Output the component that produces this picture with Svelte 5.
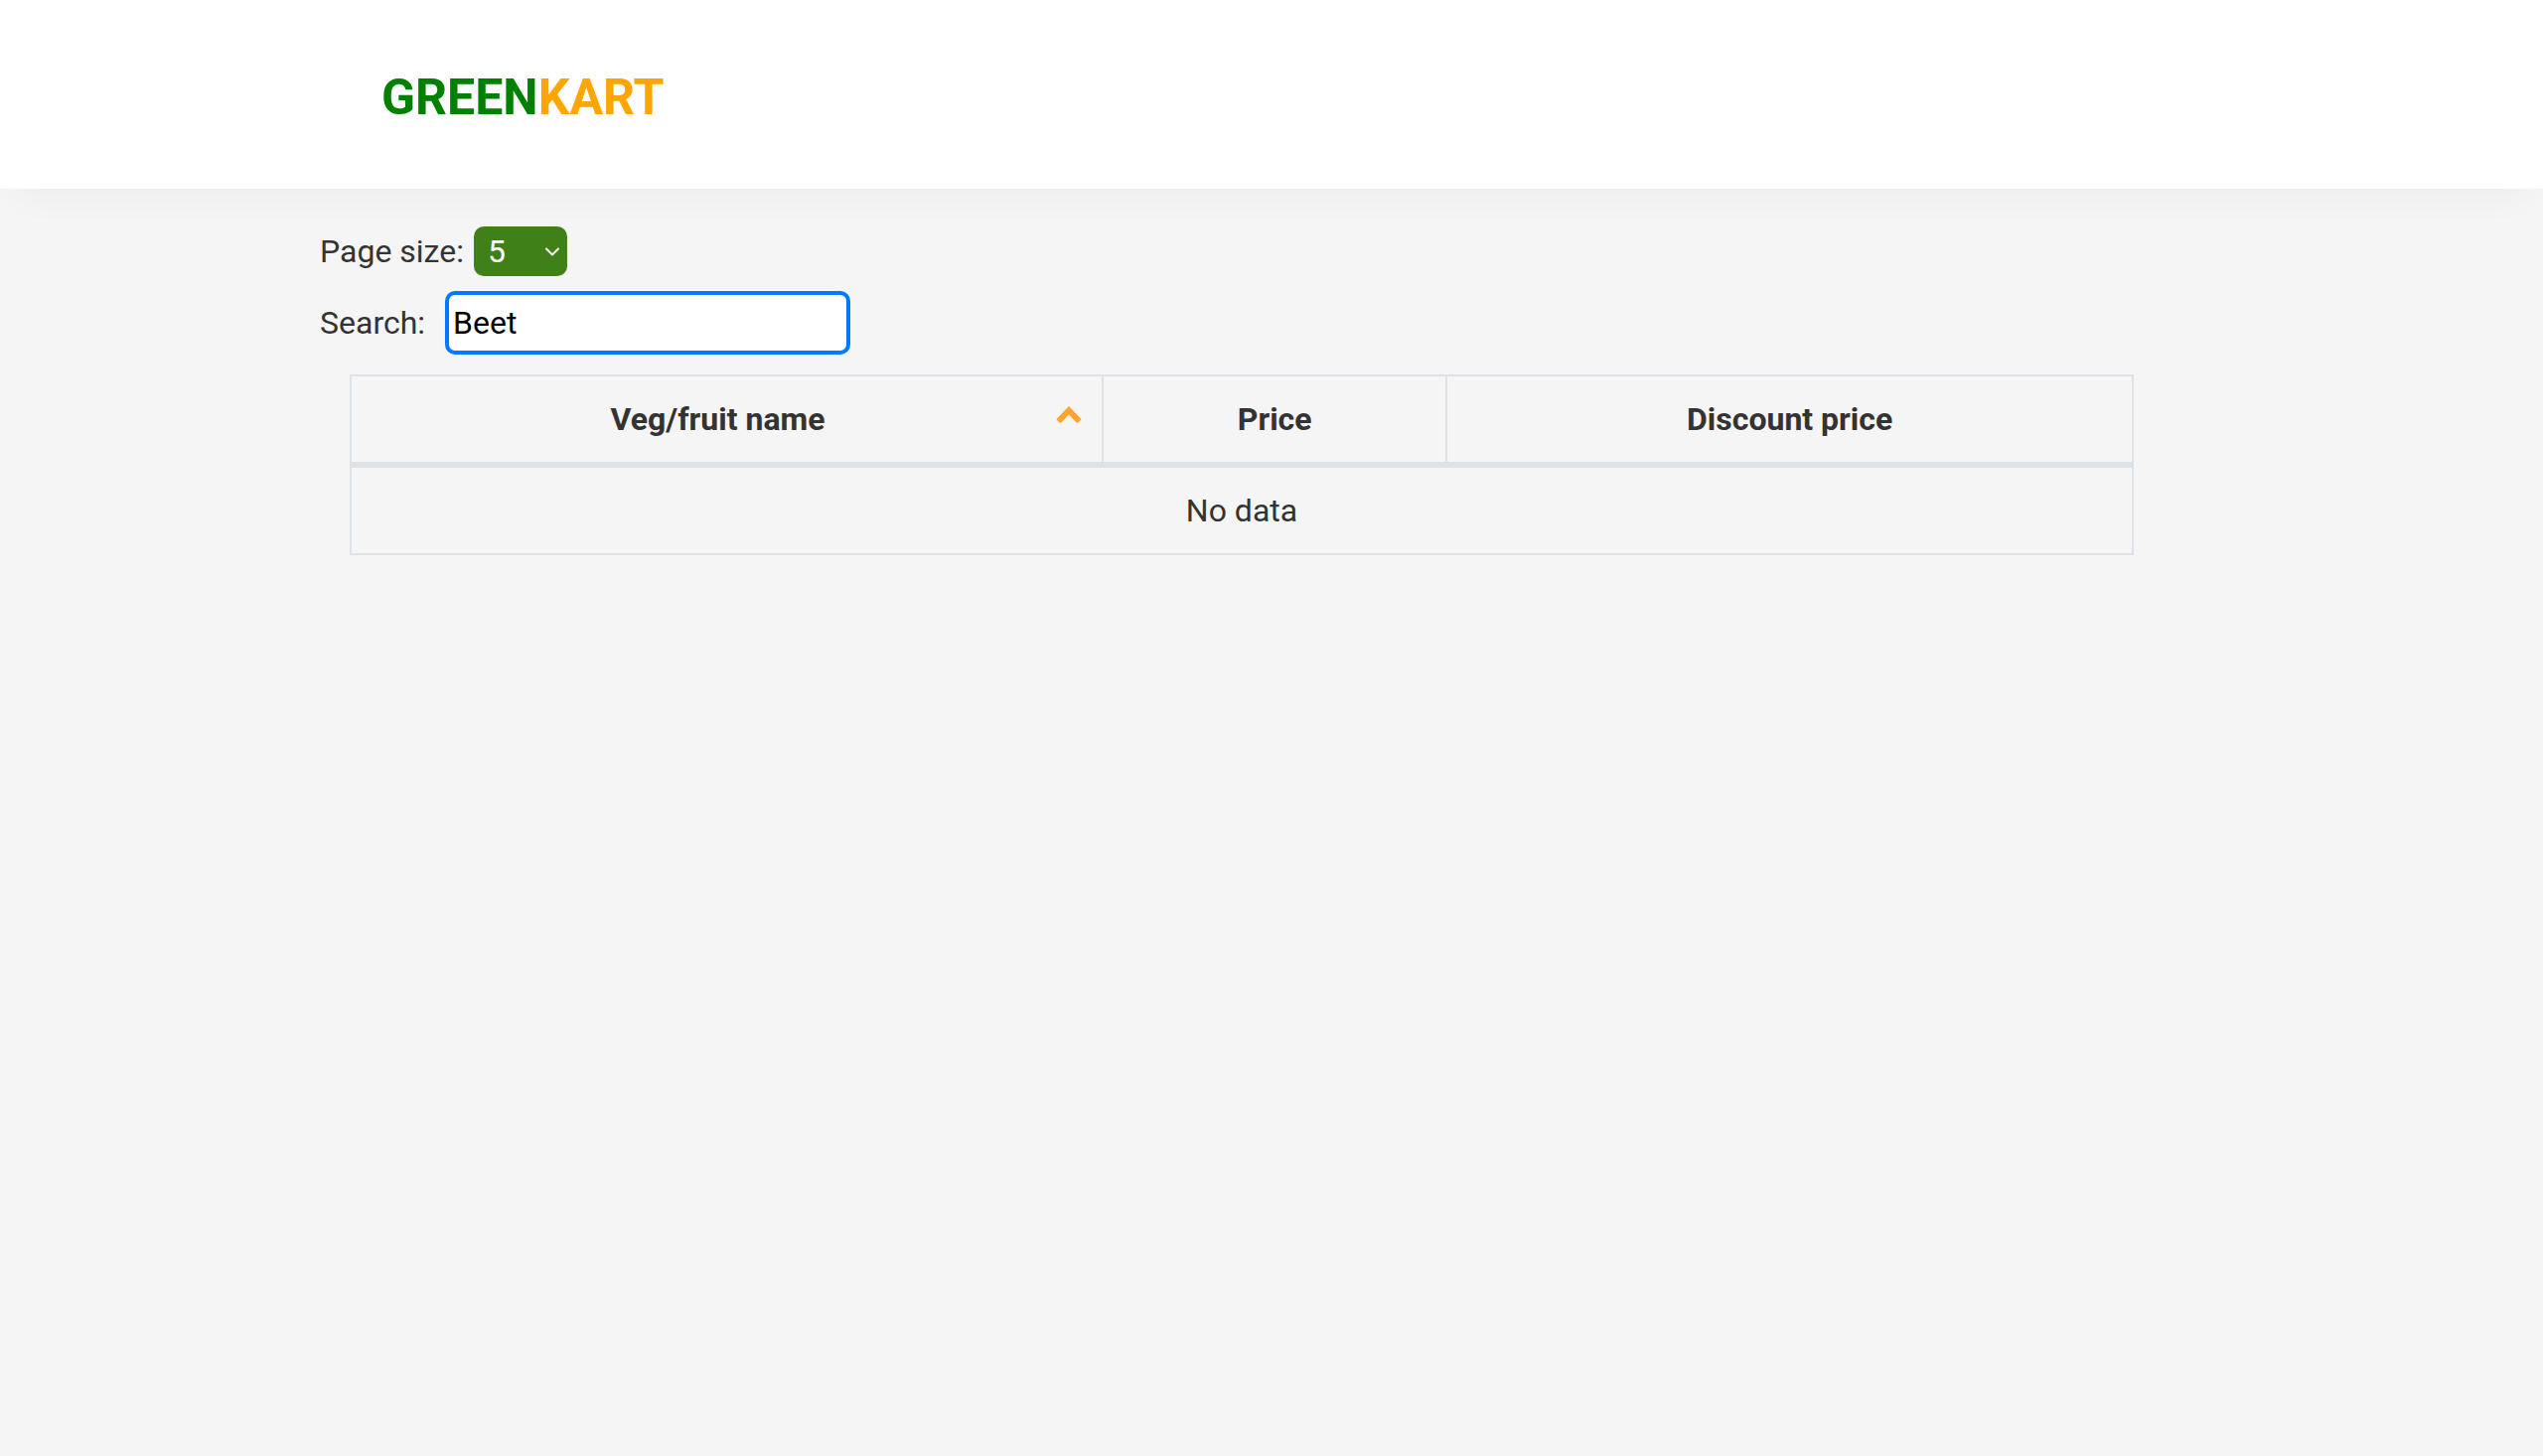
<script>
  let pageSize = $state('5');
  let query = $state('Beet');
  let ascending = $state(true);
</script>

<header class="site-header">
  <a class="brand" href="#home">GREEN<span class="brand-accent">KART</span></a>
</header>

<main class="content">
  <div class="field">
    <label class="size-label" for="page-size">Page size:</label>
    <div class="select-box">
      <select id="page-size" bind:value={pageSize}>
        <option value="5">5</option>
        <option value="10">10</option>
        <option value="20">20</option>
      </select>
      <svg class="chevron" viewBox="0 0 14 9" aria-hidden="true">
        <path d="M1 1.5 7 7.5 13 1.5" fill="none" stroke="#fff" stroke-width="2" stroke-linecap="round" stroke-linejoin="round" />
      </svg>
    </div>
  </div>

  <div class="field search">
    <label class="search-label" for="search-field">Search:</label>
    <input id="search-field" type="text" bind:value={query} />
  </div>

  <table>
    <colgroup>
      <col class="col-name" />
      <col class="col-price" />
      <col class="col-discount" />
    </colgroup>
    <thead>
      <tr>
        <th scope="col" aria-sort={ascending ? 'ascending' : 'descending'}>
          <button class="sort" type="button" onclick={() => (ascending = !ascending)}>
            <span class="sort-text">Veg/fruit name</span>
            <svg class="sort-icon" class:flipped={!ascending} viewBox="0 0 26 18" aria-hidden="true">
              <path d="M2.5 15.2 13 4.2 23.5 15.2" fill="none" stroke="#ffa52d" stroke-width="6" />
            </svg>
          </button>
        </th>
        <th scope="col">Price</th>
        <th scope="col">Discount price</th>
      </tr>
    </thead>
    <tbody>
      <tr><td colspan="3">No data</td></tr>
    </tbody>
  </table>
</main>

<style>
  :global(body) {
    background: #f5f5f5;
    color: #333;
    font-family: Roboto, sans-serif;
    font-size: 32px;
    line-height: 48px;
  }

  .site-header {
    box-sizing: border-box;
    min-height: 190px;
    padding: 68px 15% 62px;
    background: #fff;
    box-shadow: 0 20px 40px -20px rgba(0, 0, 0, 0.06);
  }

  .brand {
    display: inline-block;
    color: #008000;
    font-size: 50px;
    font-weight: 700;
    line-height: 60px;
    text-decoration: none;
  }

  .brand-accent {
    color: #ffa500;
  }

  .content {
    max-width: 1856px;
    margin: 0 382px 0 322px;
    padding-top: 38px;
  }

  .field {
    display: flex;
    align-items: center;
  }

  .size-label {
    margin-right: 10px;
  }

  .search {
    margin-top: 15px;
  }

  .search-label {
    margin-right: 20px;
  }

  .select-box {
    display: grid;
    align-items: center;
  }

  select {
    grid-area: 1 / 1;
    width: 94px;
    height: 50px;
    padding: 0 14px;
    border: 0;
    border-radius: 10px;
    appearance: none;
    background: #3f8118;
    color: #fff;
    font: inherit;
  }

  .chevron {
    grid-area: 1 / 1;
    justify-self: end;
    width: 14px;
    height: 9px;
    margin-right: 8px;
    pointer-events: none;
  }

  input {
    box-sizing: border-box;
    width: 408px;
    height: 64px;
    padding: 0 4px;
    border: 4px solid #007bff;
    border-radius: 10px;
    outline: none;
    background: #fff;
    color: #000;
    font: inherit;
  }

  table {
    width: calc(100% - 60px);
    margin: 20px 30px 0;
    border-collapse: collapse;
    table-layout: fixed;
  }

  .col-name {
    width: 42.2%;
  }

  .col-price {
    width: 19.3%;
  }

  .col-discount {
    width: 38.5%;
  }

  th,
  td {
    height: 86px;
    padding: 0;
    border: 2px solid #dee2e6;
    text-align: center;
  }

  th {
    border-bottom-width: 6px;
    font-weight: 700;
  }

  .sort {
    display: flex;
    align-items: center;
    width: 100%;
    padding: 0 20px 0 28px;
    border: 0;
    background: none;
    color: inherit;
    font: inherit;
    cursor: pointer;
  }

  .sort-text {
    flex: 1;
  }

  .sort-icon {
    width: 26px;
    height: 18px;
    margin-bottom: 8px;
  }

  .flipped {
    transform: scaleY(-1);
  }
</style>
